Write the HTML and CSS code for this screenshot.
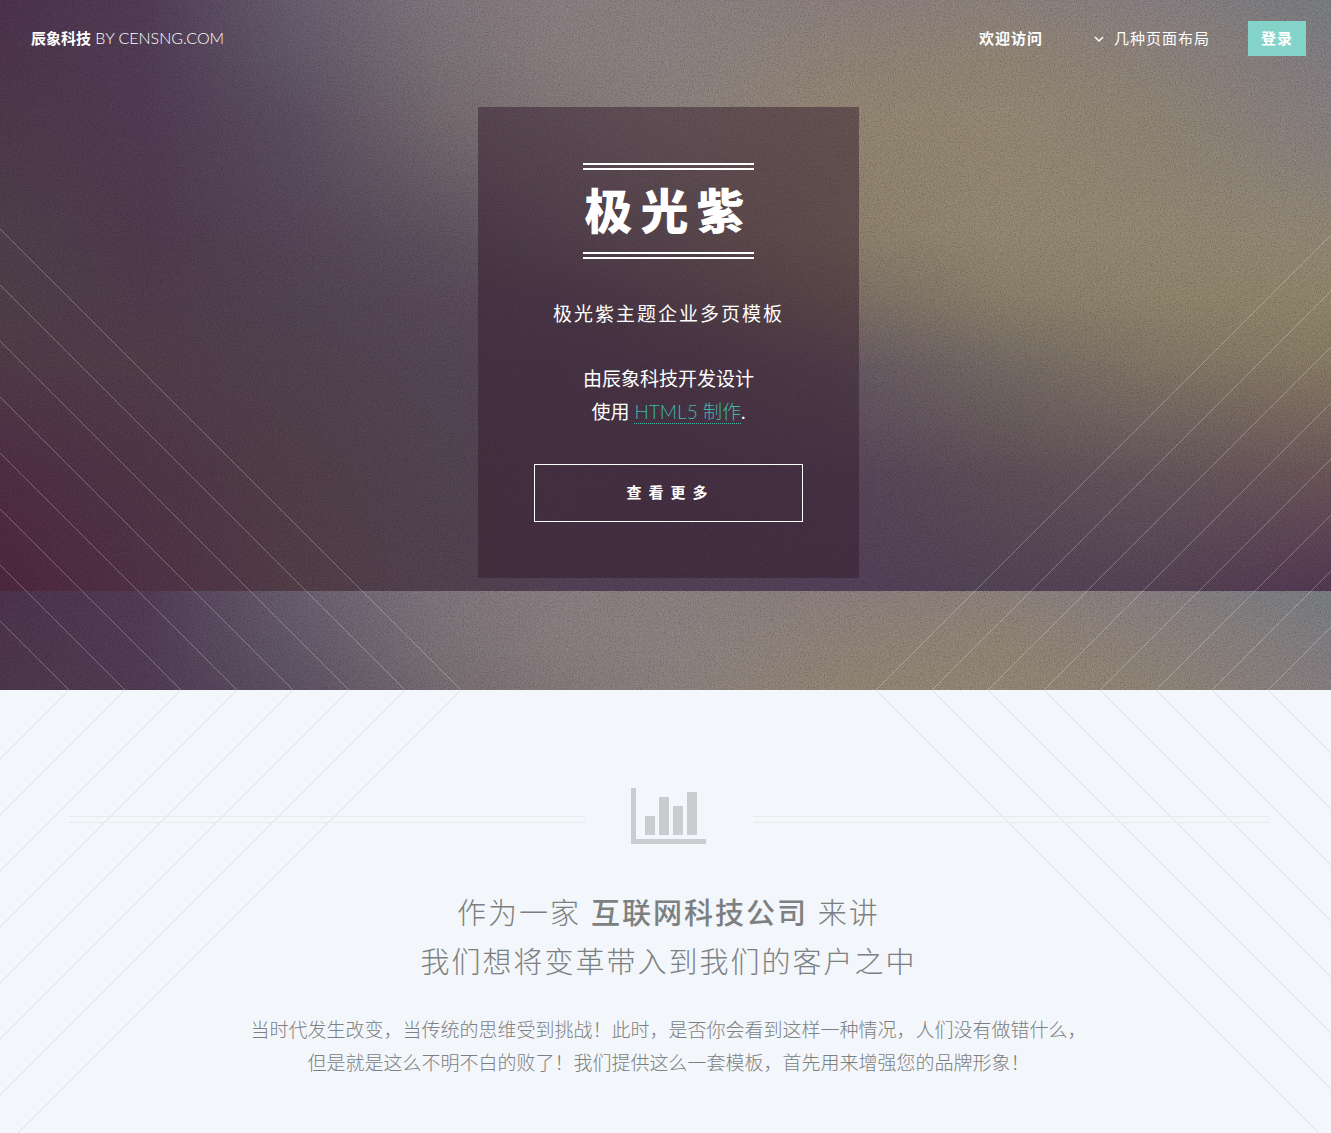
FILE: index.html
```
<!DOCTYPE html>
<html lang="zh-CN">
<head>
<meta charset="utf-8">
<meta name="viewport" content="width=device-width, initial-scale=1">
<title>极光紫</title>
<link rel="stylesheet" href="styles.css">
</head>
<body>
<div class="page">
  <div class="hero">
    <svg class="aurora" viewBox="0 0 1338 690" preserveAspectRatio="none" aria-hidden="true">
      <defs>
        <linearGradient id="r0"><stop offset="0" stop-color="#4e3550"/><stop offset=".11" stop-color="#543e58"/><stop offset=".22" stop-color="#6b6073"/><stop offset=".33" stop-color="#82797f"/><stop offset=".42" stop-color="#8d8285"/><stop offset=".5" stop-color="#8f8484"/><stop offset=".64" stop-color="#908380"/><stop offset=".75" stop-color="#91857f"/><stop offset=".86" stop-color="#8c8285"/><stop offset="1" stop-color="#7c8084"/></linearGradient>
        <linearGradient id="r1"><stop offset="0" stop-color="#4f374e"/><stop offset=".11" stop-color="#533e57"/><stop offset=".22" stop-color="#645a6c"/><stop offset=".33" stop-color="#7e757a"/><stop offset=".42" stop-color="#8c8182"/><stop offset=".5" stop-color="#908584"/><stop offset=".64" stop-color="#94877a"/><stop offset=".75" stop-color="#958877"/><stop offset=".86" stop-color="#91867d"/><stop offset="1" stop-color="#858085"/></linearGradient>
        <linearGradient id="r2"><stop offset="0" stop-color="#503a4d"/><stop offset=".11" stop-color="#533d56"/><stop offset=".22" stop-color="#5e5064"/><stop offset=".33" stop-color="#776d72"/><stop offset=".42" stop-color="#857a7b"/><stop offset=".5" stop-color="#8f8480"/><stop offset=".64" stop-color="#968975"/><stop offset=".75" stop-color="#988b77"/><stop offset=".86" stop-color="#938877"/><stop offset="1" stop-color="#8a8284"/></linearGradient>
        <linearGradient id="r3"><stop offset="0" stop-color="#50404c"/><stop offset=".11" stop-color="#513c50"/><stop offset=".22" stop-color="#58475a"/><stop offset=".33" stop-color="#615461"/><stop offset=".42" stop-color="#6f646b"/><stop offset=".5" stop-color="#7a6e6e"/><stop offset=".64" stop-color="#91846f"/><stop offset=".75" stop-color="#978b74"/><stop offset=".86" stop-color="#968b75"/><stop offset="1" stop-color="#958a77"/></linearGradient>
        <linearGradient id="r4"><stop offset="0" stop-color="#51414a"/><stop offset=".11" stop-color="#523d4e"/><stop offset=".22" stop-color="#544555"/><stop offset=".33" stop-color="#5b4b5b"/><stop offset=".42" stop-color="#5e4f60"/><stop offset=".5" stop-color="#6a5b61"/><stop offset=".64" stop-color="#7f7368"/><stop offset=".75" stop-color="#8d826d"/><stop offset=".86" stop-color="#92876f"/><stop offset="1" stop-color="#93886d"/></linearGradient>
        <linearGradient id="r5"><stop offset="0" stop-color="#523c49"/><stop offset=".11" stop-color="#533f4b"/><stop offset=".22" stop-color="#534350"/><stop offset=".33" stop-color="#574858"/><stop offset=".42" stop-color="#58485b"/><stop offset=".5" stop-color="#5c4c5c"/><stop offset=".64" stop-color="#6b5d65"/><stop offset=".75" stop-color="#786d67"/><stop offset=".86" stop-color="#857969"/><stop offset="1" stop-color="#8b7e67"/></linearGradient>
        <linearGradient id="r6"><stop offset="0" stop-color="#512f47"/><stop offset=".11" stop-color="#513748"/><stop offset=".22" stop-color="#53404a"/><stop offset=".33" stop-color="#544552"/><stop offset=".42" stop-color="#554558"/><stop offset=".5" stop-color="#564459"/><stop offset=".64" stop-color="#59485c"/><stop offset=".75" stop-color="#605159"/><stop offset=".86" stop-color="#67585e"/><stop offset="1" stop-color="#6e585b"/></linearGradient>
        <linearGradient id="r7"><stop offset="0" stop-color="#502841"/><stop offset=".11" stop-color="#523348"/><stop offset=".22" stop-color="#543f49"/><stop offset=".33" stop-color="#544350"/><stop offset=".42" stop-color="#554358"/><stop offset=".5" stop-color="#55425a"/><stop offset=".64" stop-color="#54425b"/><stop offset=".75" stop-color="#554558"/><stop offset=".86" stop-color="#574457"/><stop offset="1" stop-color="#553955"/></linearGradient>
        <linearGradient id="ramp" x2="0" y2="1"><stop offset="0" stop-color="#fff" stop-opacity="0"/><stop offset="1" stop-color="#fff"/></linearGradient>
        <mask id="fade" x="0" y="0" width="1" height="1" maskContentUnits="objectBoundingBox" color-interpolation="sRGB"><rect width="1" height="1" fill="url(#ramp)"/></mask>
        <filter id="grain" x="0" y="0" width="1" height="1">
          <feTurbulence type="fractalNoise" baseFrequency=".8" numOctaves="2" seed="4"/>
          <feColorMatrix values="0 0 0 0 0  0 0 0 0 0  0 0 0 0 0  .45 0 0 0 -.18"/>
        </filter>
        <g id="sky" shape-rendering="crispEdges">
          <rect width="1338" height="60" fill="url(#r0)"/><rect width="1338" height="60" fill="url(#r1)" mask="url(#fade)"/>
          <rect y="60" width="1338" height="60" fill="url(#r1)"/><rect y="60" width="1338" height="60" fill="url(#r2)" mask="url(#fade)"/>
          <rect y="120" width="1338" height="116" fill="url(#r2)"/><rect y="120" width="1338" height="116" fill="url(#r3)" mask="url(#fade)"/>
          <rect y="236" width="1338" height="64" fill="url(#r3)"/><rect y="236" width="1338" height="64" fill="url(#r4)" mask="url(#fade)"/>
          <rect y="300" width="1338" height="64" fill="url(#r4)"/><rect y="300" width="1338" height="64" fill="url(#r5)" mask="url(#fade)"/>
          <rect y="364" width="1338" height="108" fill="url(#r5)"/><rect y="364" width="1338" height="108" fill="url(#r6)" mask="url(#fade)"/>
          <rect y="472" width="1338" height="119" fill="url(#r6)"/><rect y="472" width="1338" height="119" fill="url(#r7)" mask="url(#fade)"/>
        </g>
      </defs>
      <use href="#sky"/>
      <use href="#sky" y="591"/>
      <rect width="1338" height="690" filter="url(#grain)"/>
    </svg>
    <svg class="rays rays-left" viewBox="0 0 461 461" aria-hidden="true">
      <path id="rays" d="M0 0 461 461M0 56 405 461M0 112 349 461M0 168 293 461M0 224 237 461M0 280 181 461M0 336 125 461M0 392 69 461"/>
    </svg>
    <svg class="rays rays-right" viewBox="0 0 461 461" aria-hidden="true">
      <use href="#rays" transform="matrix(-1 0 0 1 461 0)"/>
    </svg>

    <header class="site-header">
      <a class="logo" href="#"><strong>辰象科技</strong> BY CENSNG.COM</a>
      <nav class="site-nav">
        <a class="current" href="#">欢迎访问</a>
        <a class="submenu" href="#"><svg class="chevron" viewBox="0 0 10 6" aria-hidden="true"><path d="M1 1 5 5 9 1"/></svg>几种页面布局</a>
        <a class="login" href="#">登录</a>
      </nav>
    </header>

    <section class="banner">
      <h1>极光紫</h1>
      <p class="tagline">极光紫主题企业多页模板</p>
      <p class="credits">由辰象科技开发设计<br>使用 <a href="#">HTML5 制作</a>.</p>
      <button class="more" type="button">查看更多</button>
    </section>
  </div>

  <main class="intro">
    <svg class="rays rays-left" viewBox="0 0 461 461" aria-hidden="true">
      <use href="#rays" transform="matrix(1 0 0 -1 0 461)"/>
    </svg>
    <svg class="rays rays-right" viewBox="0 0 461 461" aria-hidden="true">
      <use href="#rays" transform="matrix(-1 0 0 -1 461 461)"/>
    </svg>
    <div class="divider">
      <span class="rule"></span>
      <svg class="chart" viewBox="0 0 75 56" aria-hidden="true"><path d="M0 0h5v51h70v5H0zM14 28h10v19H14zM28 9h10v38H28zM42 18h10v29H42zM56 4h10v43H56z"/></svg>
      <span class="rule"></span>
    </div>
    <h2>作为一家 <strong>互联网科技公司</strong> 来讲<br>我们想将变革带入到我们的客户之中</h2>
    <p class="lead">当时代发生改变，当传统的思维受到挑战！此时，是否你会看到这样一种情况，人们没有做错什么，<br>但是就是这么不明不白的败了！我们提供这么一套模板，首先用来增强您的品牌形象！</p>
  </main>
</div>
</body>
</html>
```
FILE: styles.css
```
* { box-sizing: border-box; }

html { overflow-x: hidden; }

body {
  margin: 0;
  overflow-x: hidden;
  background: #f3f6fa;
  color: #7c8081;
  font: 300 19px/33px Lato, "Noto Sans CJK SC", sans-serif;
}

h1, h2, p { margin: 0; }
a { color: inherit; text-decoration: none; }

/* the page bleeds slightly past the right edge of the window */
.page { margin-right: -6px; }

.hero {
  position: relative;
  overflow: hidden;
  padding-bottom: 112px;
  background: #6b5d65;
  color: #fff;
}

.aurora {
  position: absolute;
  inset: 0;
  width: 100%;
  height: 100%;
}

.rays {
  position: absolute;
  width: 461px;
  height: 461px;
  fill: none;
  stroke: #fff;
  stroke-opacity: .27;
}
.rays-left { left: 0; }
.rays-right { right: 0; }
.hero .rays { bottom: 0; }
.intro .rays { top: 0; stroke: #7c8081; stroke-opacity: .18; }

.site-header {
  position: relative;
  display: flex;
  justify-content: space-between;
  align-items: flex-start;
  padding: 21px 31px 0;
  font-size: 15px;
  line-height: 35px;
}
.logo {
  font-size: 16px;
  line-height: 33px;
}
.logo strong { font-size: 15px; font-weight: 700; }

.site-nav {
  display: flex;
  letter-spacing: 1px;
}
.current { margin-right: 51px; font-weight: 700; }
.submenu {
  display: flex;
  align-items: center;
  gap: 10px;
  margin-right: 38px;
  font-weight: 400;
}
.chevron {
  width: 10px;
  height: 6px;
  fill: none;
  stroke: #fff;
  stroke-width: 1.5;
}
.login {
  padding: 0 13px;
  background: #83d3c9;
  font-weight: 700;
}

.banner {
  position: relative;
  display: flex;
  flex-direction: column;
  align-items: center;
  width: 381px;
  max-width: 100%;
  margin: 51px auto 0;
  padding: 56px;
  background: rgba(52, 27, 43, .5);
  text-align: center;
}
.banner h1 {
  padding: 0 1px;
  border: double #fff;
  border-width: 7px 0;
  font-size: 48px;
  font-weight: 900;
  line-height: 82px;
  letter-spacing: 8px;
}
.tagline {
  margin-top: 38px;
  font-weight: 400;
  letter-spacing: 2px;
  white-space: nowrap;
}
.credits { margin-top: 32px; font-weight: 400; }
.credits a {
  border-bottom: 1px dotted #3fb8a8;
  color: #3fb8a8;
  font-weight: 300;
}
.more {
  width: 100%;
  height: 58px;
  margin-top: 36px;
  padding: 0 0 2px 4px;
  border: 1px solid #fff;
  background: transparent;
  color: #fff;
  font: 700 15px/54px Lato, "Noto Sans CJK SC", sans-serif;
  letter-spacing: 7px;
}

.intro {
  position: relative;
  overflow: hidden;
  padding: 98px 68px 54px;
  text-align: center;
}

.divider {
  position: relative;
  display: flex;
  align-items: center;
  justify-content: space-between;
  max-width: 1200px;
  margin: 0 auto 44px;
}
.rule {
  flex: 1;
  height: 7px;
  margin-top: 7px;
  border: solid #e5eaeb;
  border-width: 1px 0;
}
.chart {
  width: 75px;
  height: 56px;
  margin: 0 47px 0 46px;
  fill: #c9cdcf;
}

.intro h2 {
  position: relative;
  font-size: 29px;
  font-weight: 300;
  line-height: 49px;
  letter-spacing: 2px;
}
.intro h2 strong { font-weight: 500; }
.lead { position: relative; margin-top: 27px; }
```
